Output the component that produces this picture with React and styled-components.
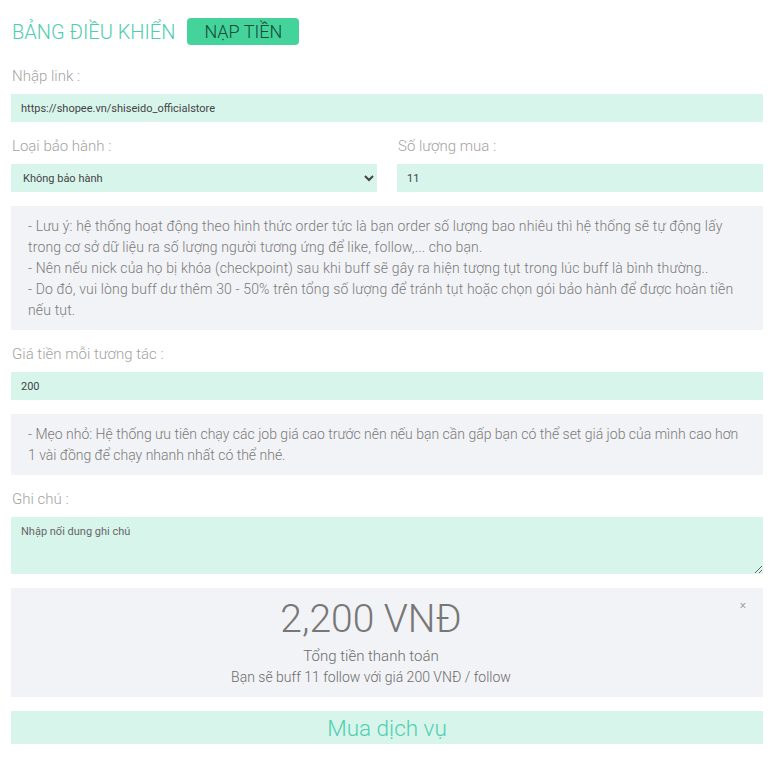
import React from 'react'
import styled, { createGlobalStyle } from 'styled-components';

const GlobalStyle = createGlobalStyle`
  body {
    margin: 0;
    background: #ffffff;
    font-family: Roboto, "Noto Sans", sans-serif;
    font-weight: 300;
  }
  * { box-sizing: border-box; }
`;

const Page = styled.div`
  padding: 18px 8px 20px 11px;
`;

const Header = styled.div`
  display: flex;
  align-items: center;
  gap: 12px;
  height: 27px;
  margin-bottom: 21px;
`;

const Title = styled.h1`
  margin: 0 0 0 1px;
  font-size: 20px;
  font-weight: 300;
  color: #4fcdae;
`;

const TopUp = styled.button`
  height: 27px;
  padding: 0 17px;
  border: none;
  border-radius: 4px;
  background: #43d39b;
  color: #17493a;
  font-family: inherit;
  font-size: 18px;
  font-weight: 300;
`;

const Field = styled.div`
  margin-bottom: 14px;
`;

const Row = styled.div`
  display: grid;
  grid-template-columns: 1fr 1fr;
  gap: 20px;
`;

const Label = styled.div`
  font-size: 15px;
  line-height: 20px;
  color: #a3a3a3;
  margin: 0 0 8px 1px;
`;

const Input = styled.input`
  display: block;
  width: 100%;
  height: 28px;
  border: none;
  outline: none;
  background: #d8f5ec;
  padding: 0 10px;
  font-family: inherit;
  font-size: 11px;
  font-weight: 400;
  color: #444;
`;

const Select = styled.select`
  display: block;
  width: 100%;
  height: 28px;
  border: none;
  outline: none;
  background: #d8f5ec;
  padding: 0 8px;
  font-family: inherit;
  font-size: 11px;
  font-weight: 400;
  color: #444;
`;

const TextArea = styled.textarea`
  display: block;
  width: 100%;
  height: 57px;
  border: none;
  outline: none;
  background: #d8f5ec;
  padding: 8px 10px;
  font-family: inherit;
  font-size: 11px;
  font-weight: 400;
  color: #444;
  &::placeholder { color: #666; }
`;

const Notice = styled.div`
  background: #f2f3f6;
  padding: 10px 17px 9px;
  margin-bottom: 14px;
  font-size: 14px;
  line-height: 21px;
  letter-spacing: ${(p) => p.$spacing || '0.15px'};
  color: #7a7a7a;
`;

const Total = styled.div`
  position: relative;
  background: #f2f3f6;
  padding: 6px 32px 9px 0;
  margin-bottom: 14px;
  text-align: center;
  color: #6c6c6c;
`;

const Amount = styled.div`
  font-size: 39px;
  line-height: 50px;
  color: #777;
  margin-bottom: 2px;
`;

const Caption = styled.div`
  font-size: ${(p) => p.$size || '15px'};
  line-height: 21px;
`;

const Close = styled.span`
  position: absolute;
  top: 10px;
  right: 17px;
  font-size: 12px;
  color: #888;
`;

const BuyButton = styled.button`
  display: block;
  width: 100%;
  height: 33px;
  border: none;
  background: #d8f5ec;
  color: #4fcfb0;
  font-family: inherit;
  font-size: 22.5px;
  font-weight: 300;
`;

const App = () => {
  return (
    <Page>
      <GlobalStyle />
      <Header>
        <Title>BẢNG ĐIỀU KHIỂN</Title>
        <TopUp>NẠP TIỀN</TopUp>
      </Header>

      <Field>
        <Label>Nhập link :</Label>
        <Input defaultValue="https://shopee.vn/shiseido_officialstore" />
      </Field>

      <Row>
        <Field>
          <Label>Loại bảo hành :</Label>
          <Select defaultValue="none">
            <option value="none">Không bảo hành</option>
          </Select>
        </Field>
        <Field>
          <Label>Số lượng mua :</Label>
          <Input defaultValue="11" />
        </Field>
      </Row>

      <Notice>
        - Lưu ý: hệ thống hoạt động theo hình thức order tức là bạn order số lượng bao nhiêu thì hệ thống sẽ tự động lấy trong cơ sở dữ liệu ra số lượng người tương ứng để like, follow,... cho bạn.
        <br />
        - Nên nếu nick của họ bị khóa (checkpoint) sau khi buff sẽ gây ra hiện tượng tụt trong lúc buff là bình thường..
        <br />
        - Do đó, vui lòng buff dư thêm 30 - 50% trên tổng số lượng để tránh tụt hoặc chọn gói bảo hành để được hoàn tiền nếu tụt.
      </Notice>

      <Field>
        <Label>Giá tiền mỗi tương tác :</Label>
        <Input defaultValue="200" />
      </Field>

      <Notice $spacing="0">
        - Mẹo nhỏ: Hệ thống ưu tiên chạy các job giá cao trước nên nếu bạn cần gấp bạn có thể set giá job của mình cao hơn 1 vài đồng để chạy nhanh nhất có thể nhé.
      </Notice>

      <Field>
        <Label>Ghi chú :</Label>
        <TextArea placeholder="Nhập nối dung ghi chú" />
      </Field>

      <Total>
        <Close>×</Close>
        <Amount>2,200 VNĐ</Amount>
        <Caption>Tổng tiền thanh toán</Caption>
        <Caption $size="14px">Bạn sẽ buff 11 follow với giá 200 VNĐ / follow</Caption>
      </Total>

      <BuyButton>Mua dịch vụ</BuyButton>
    </Page>
  );
}

export default App;
